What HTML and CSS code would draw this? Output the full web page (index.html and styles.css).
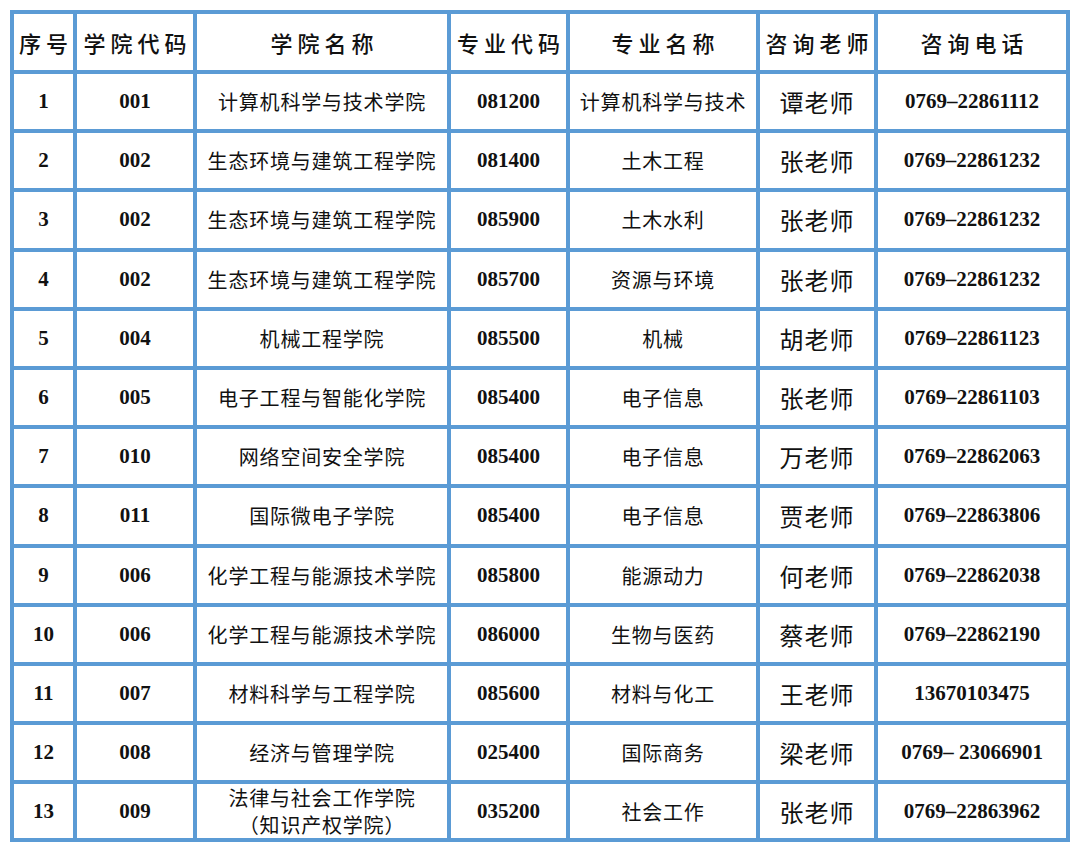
FILE: index.html
```html
<!DOCTYPE html>
<html lang="zh-CN">
<head>
<meta charset="utf-8">
<title>咨询表</title>
<link rel="stylesheet" href="styles.css">
</head>
<body>
<div class="page">
<table class="grid">
  <colgroup>
    <col class="c1"><col class="c2"><col class="c3"><col class="c4"><col class="c5"><col class="c6"><col class="c7">
  </colgroup>
  <thead>
    <tr class="head">
      <th>序号</th><th>学院代码</th><th>学院名称</th><th>专业代码</th><th>专业名称</th><th>咨询老师</th><th>咨询电话</th>
    </tr>
  </thead>
  <tbody>
    <tr><td class="num">1</td><td class="num">001</td><td class="zh">计算机科学与技术学院</td><td class="num">081200</td><td class="zh">计算机科学与技术</td><td class="tch">谭老师</td><td class="num">0769–22861112</td></tr>
    <tr><td class="num">2</td><td class="num">002</td><td class="zh">生态环境与建筑工程学院</td><td class="num">081400</td><td class="zh">土木工程</td><td class="tch">张老师</td><td class="num">0769–22861232</td></tr>
    <tr><td class="num">3</td><td class="num">002</td><td class="zh">生态环境与建筑工程学院</td><td class="num">085900</td><td class="zh">土木水利</td><td class="tch">张老师</td><td class="num">0769–22861232</td></tr>
    <tr><td class="num">4</td><td class="num">002</td><td class="zh">生态环境与建筑工程学院</td><td class="num">085700</td><td class="zh">资源与环境</td><td class="tch">张老师</td><td class="num">0769–22861232</td></tr>
    <tr><td class="num">5</td><td class="num">004</td><td class="zh">机械工程学院</td><td class="num">085500</td><td class="zh">机械</td><td class="tch">胡老师</td><td class="num">0769–22861123</td></tr>
    <tr><td class="num">6</td><td class="num">005</td><td class="zh">电子工程与智能化学院</td><td class="num">085400</td><td class="zh">电子信息</td><td class="tch">张老师</td><td class="num">0769–22861103</td></tr>
    <tr><td class="num">7</td><td class="num">010</td><td class="zh">网络空间安全学院</td><td class="num">085400</td><td class="zh">电子信息</td><td class="tch">万老师</td><td class="num">0769–22862063</td></tr>
    <tr><td class="num">8</td><td class="num">011</td><td class="zh">国际微电子学院</td><td class="num">085400</td><td class="zh">电子信息</td><td class="tch">贾老师</td><td class="num">0769–22863806</td></tr>
    <tr><td class="num">9</td><td class="num">006</td><td class="zh">化学工程与能源技术学院</td><td class="num">085800</td><td class="zh">能源动力</td><td class="tch">何老师</td><td class="num">0769–22862038</td></tr>
    <tr><td class="num">10</td><td class="num">006</td><td class="zh">化学工程与能源技术学院</td><td class="num">086000</td><td class="zh">生物与医药</td><td class="tch">蔡老师</td><td class="num">0769–22862190</td></tr>
    <tr><td class="num">11</td><td class="num">007</td><td class="zh">材料科学与工程学院</td><td class="num">085600</td><td class="zh">材料与化工</td><td class="tch">王老师</td><td class="num">13670103475</td></tr>
    <tr><td class="num">12</td><td class="num">008</td><td class="zh">经济与管理学院</td><td class="num">025400</td><td class="zh">国际商务</td><td class="tch">梁老师</td><td class="num">0769– 23066901</td></tr>
    <tr class="last"><td class="num">13</td><td class="num">009</td><td class="zh two">法律与社会工作学院<br>（知识产权学院）</td><td class="num">035200</td><td class="zh">社会工作</td><td class="tch">张老师</td><td class="num">0769–22863962</td></tr>
  </tbody>
</table>
</div>
</body>
</html>
```

FILE: styles.css
```css
html, body {
  margin: 0;
  padding: 0;
  background: #ffffff;
}

.page {
  padding: 10px 0 0 10px;
}

.grid {
  border-collapse: collapse;
  table-layout: fixed;
  width: 1060px;
  color: #111111;
}

.grid col.c1 { width: 63px; }
.grid col.c2 { width: 120px; }
.grid col.c3 { width: 254px; }
.grid col.c4 { width: 119px; }
.grid col.c5 { width: 190px; }
.grid col.c6 { width: 118px; }
.grid col.c7 { width: 192px; }

.grid th,
.grid td {
  border: 4px solid #5b9bd5;
  padding: 0;
  text-align: center;
  vertical-align: middle;
  white-space: nowrap;
}

.grid tr.head { height: 60px; }
.grid tbody tr { height: 59.2px; }
.grid tbody tr.last { height: 56px; }

.grid th {
  font-family: "Noto Sans CJK SC", "Noto Sans", sans-serif;
  font-weight: 500;
  font-size: 22px;
  letter-spacing: 5px;
  padding-left: 5px;
}

.num {
  font-family: "Liberation Serif", "Times New Roman", serif;
  font-weight: 700;
  font-size: 21px;
}

.zh {
  font-family: "Noto Sans CJK SC", "Noto Sans", sans-serif;
  font-weight: 400;
  font-size: 20px;
  letter-spacing: 0.8px;
}

.zh.two {
  line-height: 27px;
}

.tch {
  font-family: "Noto Sans CJK SC", "Noto Sans", sans-serif;
  font-weight: 400;
  font-size: 24px;
  letter-spacing: 1px;
}
```
